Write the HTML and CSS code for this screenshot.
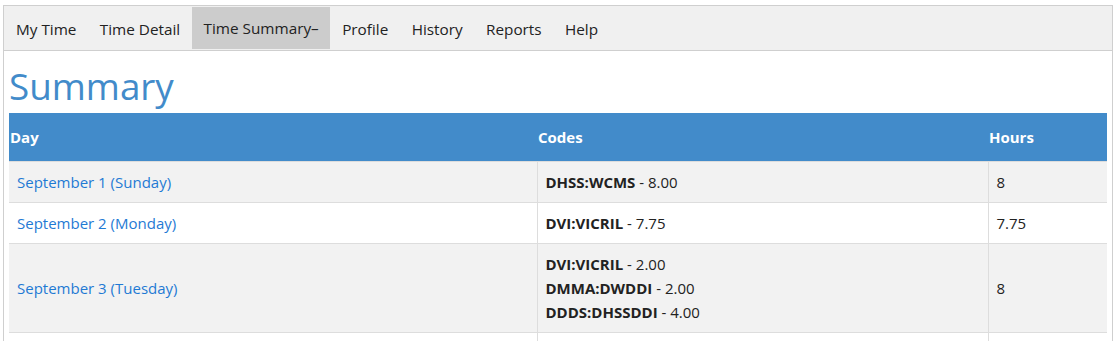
FILE: index.html
```html
<!DOCTYPE html>
<html>
<head>
<meta charset="utf-8">
<link rel="stylesheet" href="styles.css">
</head>
<body>
<div class="frame">
  <nav class="nav">
    <a class="nav-item">My Time</a>
    <a class="nav-item">Time Detail</a>
    <a class="nav-item active">Time Summary–</a>
    <a class="nav-item">Profile</a>
    <a class="nav-item">History</a>
    <a class="nav-item">Reports</a>
    <a class="nav-item">Help</a>
  </nav>
  <div class="content">
    <h1 class="title">Summary</h1>
    <table class="summary">
      <thead>
        <tr><th class="c-day">Day</th><th class="c-codes">Codes</th><th class="c-hours">Hours</th></tr>
      </thead>
      <tbody>
        <tr class="odd">
          <td><a class="day-link">September 1 (Sunday)</a></td>
          <td><b>DHSS:WCMS</b> - 8.00</td>
          <td>8</td>
        </tr>
        <tr>
          <td><a class="day-link">September 2 (Monday)</a></td>
          <td><b>DVI:VICRIL</b> - 7.75</td>
          <td>7.75</td>
        </tr>
        <tr class="odd">
          <td><a class="day-link">September 3 (Tuesday)</a></td>
          <td><b>DVI:VICRIL</b> - 2.00<br><b>DMMA:DWDDI</b> - 2.00<br><b>DDDS:DHSSDDI</b> - 4.00</td>
          <td>8</td>
        </tr>
        <tr class="empty">
          <td></td>
          <td></td>
          <td></td>
        </tr>
      </tbody>
    </table>
  </div>
</div>
</body>
</html>
```
FILE: styles.css
```css
html, body {
  margin: 0;
  padding: 0;
  background: #ffffff;
  overflow: hidden;
}
body {
  font-family: "Open Sans", "Noto Sans", sans-serif;
  font-size: 15px;
  color: #222;
  height: 341px;
}
.frame {
  margin: 5px 0 0 3px;
  width: 1108px;
  border: 1px solid #cfcfcf;
  border-bottom: none;
  height: 335px;
  overflow: hidden;
}
.nav {
  display: flex;
  background: #f0f0f0;
  border-bottom: 1px solid #cfcfcf;
  height: 44px;
}
.nav-item {
  display: flex;
  align-items: center;
  padding: 0 11.7px;
  font-size: 15.3px;
  color: #222;
  margin-top: 1px;
}
.nav-item:first-child { padding-left: 12px; }
.nav-item.active {
  background: #cccccc;
  margin-bottom: 1px;
}
.content {
  padding: 0 5px;
}
.title {
  margin: 8px 0 0 0;
  font-weight: 400;
  font-size: 36.8px;
  line-height: 54px;
  color: #428bca;
}
.summary {
  width: 100%;
  border-collapse: collapse;
}
.summary th {
  background: #428bca;
  color: #fff;
  text-align: left;
  font-weight: 700;
  height: 48px;
  padding: 0 2px 0 1px;
  font-size: 15px;
}
.c-day { width: 525px; }
.c-codes { width: 448px; }
.summary td {
  padding: 8px 8px;
  border-top: 1px solid #dddddd;
  border-left: 1px solid #dddddd;
  vertical-align: middle;
  line-height: 24px;
}
.summary td:first-child { border-left: none; }
.summary tr.odd td { background: #f2f2f2; }
.summary tr.empty td { height: 24px; }
.day-link { color: #1f7ad4; }
.summary b { font-weight: 700; color: #222; }
```
